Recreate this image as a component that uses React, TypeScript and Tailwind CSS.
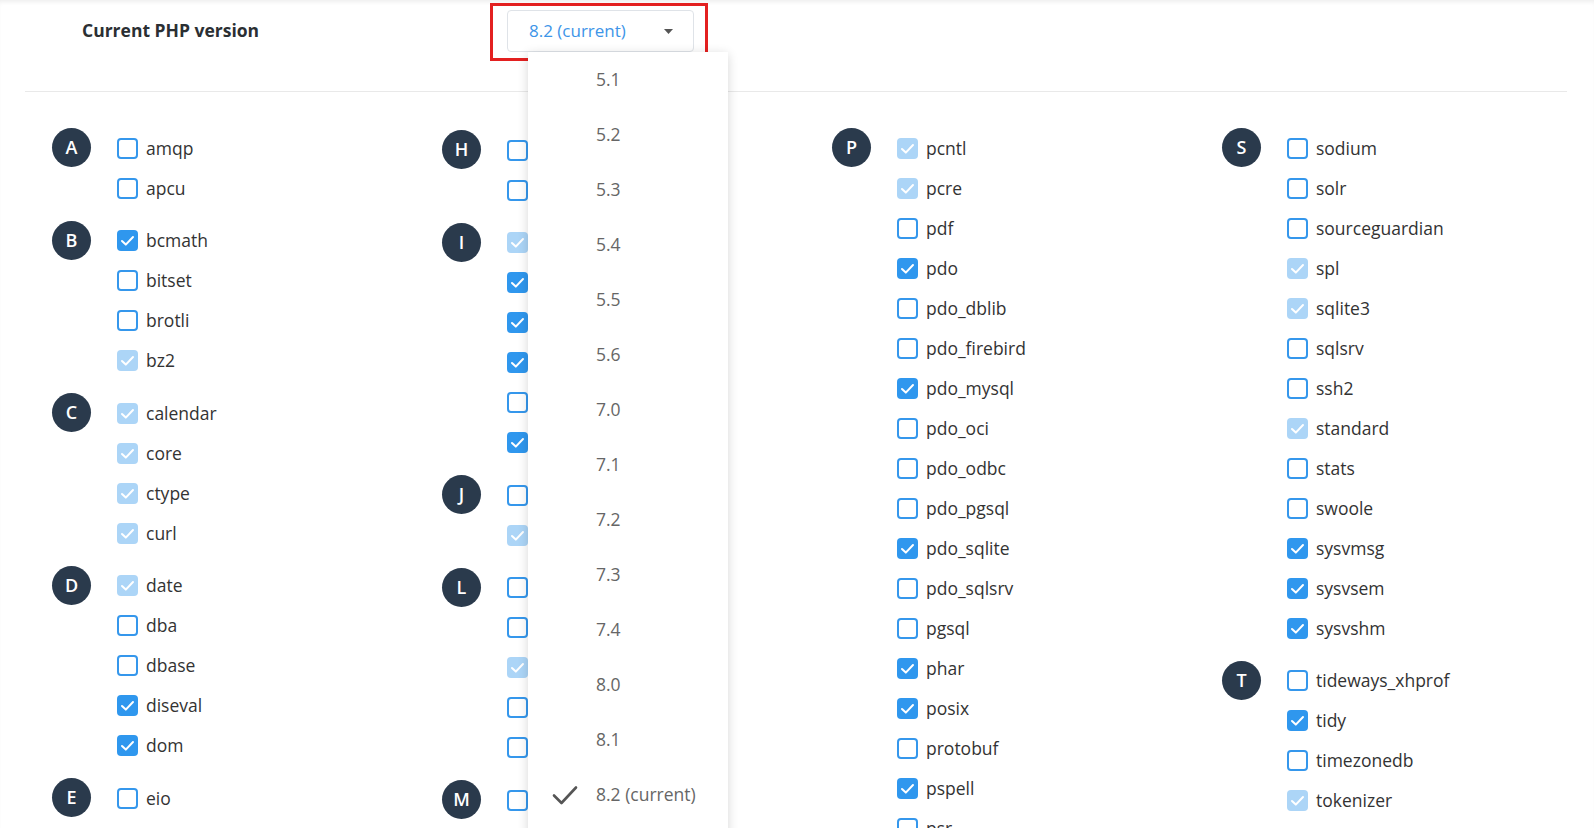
import React from "react"

type State = "off" | "on" | "locked"

interface Group {
  letter: string
  items: [string, State][]
}

const COLUMNS: Group[][] = [
  [
    { letter: "A", items: [["amqp", "off"], ["apcu", "off"]] },
    { letter: "B", items: [["bcmath", "on"], ["bitset", "off"], ["brotli", "off"], ["bz2", "locked"]] },
    { letter: "C", items: [["calendar", "locked"], ["core", "locked"], ["ctype", "locked"], ["curl", "locked"]] },
    { letter: "D", items: [["date", "locked"], ["dba", "off"], ["dbase", "off"], ["diseval", "on"], ["dom", "on"]] },
    { letter: "E", items: [["eio", "off"], ["enchant", "off"]] },
  ],
  [
    { letter: "H", items: [["hrtime", "off"], ["http", "off"]] },
    {
      letter: "I",
      items: [["iconv", "locked"], ["igbinary", "on"], ["imagick", "on"], ["imap", "on"], ["inotify", "off"], ["intl", "on"]],
    },
    { letter: "J", items: [["jsmin", "off"], ["json", "locked"]] },
    { letter: "L", items: [["ldap", "off"], ["leveldb", "off"], ["libxml", "locked"], ["lua", "off"], ["lzf", "off"]] },
    { letter: "M", items: [["mailparse", "off"], ["mbstring", "on"]] },
  ],
  [
    {
      letter: "P",
      items: [
        ["pcntl", "locked"],
        ["pcre", "locked"],
        ["pdf", "off"],
        ["pdo", "on"],
        ["pdo_dblib", "off"],
        ["pdo_firebird", "off"],
        ["pdo_mysql", "on"],
        ["pdo_oci", "off"],
        ["pdo_odbc", "off"],
        ["pdo_pgsql", "off"],
        ["pdo_sqlite", "on"],
        ["pdo_sqlsrv", "off"],
        ["pgsql", "off"],
        ["phar", "on"],
        ["posix", "on"],
        ["protobuf", "off"],
        ["pspell", "on"],
        ["psr", "off"],
      ],
    },
  ],
  [
    {
      letter: "S",
      items: [
        ["sodium", "off"],
        ["solr", "off"],
        ["sourceguardian", "off"],
        ["spl", "locked"],
        ["sqlite3", "locked"],
        ["sqlsrv", "off"],
        ["ssh2", "off"],
        ["standard", "locked"],
        ["stats", "off"],
        ["swoole", "off"],
        ["sysvmsg", "on"],
        ["sysvsem", "on"],
        ["sysvshm", "on"],
      ],
    },
    { letter: "T", items: [["tideways_xhprof", "off"], ["tidy", "on"], ["timezonedb", "off"], ["tokenizer", "locked"]] },
  ],
]

const VERSIONS = ["5.1", "5.2", "5.3", "5.4", "5.5", "5.6", "7.0", "7.1", "7.2", "7.3", "7.4", "8.0", "8.1", "8.2 (current)"]

function Checkbox({ state }: { state: State }) {
  if (state === "off") {
    return <span className="w-[21px] h-[21px] shrink-0 rounded-[4px] border-2 border-[#3597ec] bg-white" />
  }
  return (
    <span
      className={`w-[21px] h-[21px] shrink-0 rounded-[4px] flex items-center justify-center ${
        state === "on" ? "bg-[#2f97ee]" : "bg-[#acd5f7]"
      }`}
    >
      <svg width="21" height="21" viewBox="0 0 21 21" fill="none">
        <path d="M5 11 L8.8 14.6 L16 7" stroke="white" strokeWidth="2" strokeLinecap="round" strokeLinejoin="round" />
      </svg>
    </span>
  )
}

function ExtensionGroup({ group }: { group: Group }) {
  return (
    <div className="flex mb-[12.5px]">
      <div className="w-[39px] h-[39px] shrink-0 rounded-full bg-[#2a3a4c] text-white flex items-center justify-center text-[18px] font-semibold">
        {group.letter}
      </div>
      <div className="ml-[26px] flex flex-col">
        {group.items.map(([name, state]) => (
          <label key={name} className="flex items-center h-[40px] gap-[8px] cursor-pointer">
            <Checkbox state={state} />
            <span className="text-[17.5px] text-[#333]">{name}</span>
          </label>
        ))}
      </div>
    </div>
  )
}

export default function App() {
  return (
    <div
      className="w-full h-[828px] overflow-hidden bg-white pl-[25px] shadow-[inset_0_4px_4px_-2px_rgba(0,0,0,0.07)]"
      style={{ fontFamily: '"Open Sans", "Noto Sans", sans-serif' }}
    >
      <div className="w-[1542px]">
        {/* Header */}
        <div className="flex items-start pt-[10px] h-[92px] border-b border-[#e9e9e9]">
          <div className="pl-[57px] w-[482px] h-[40px] flex items-center text-[17.5px] font-bold text-[#2b2f33]">
            Current PHP version
          </div>
          <div className="relative z-10 w-[187px] h-[42px] border border-[#dfe3e8] rounded-[4px] pl-[21px] pr-[20px] flex items-center">
            <span className="text-[17px] text-[#3d95e8]">8.2 (current)</span>
            <svg className="ml-auto" width="9" height="5" viewBox="0 0 9 5">
              <path d="M0 0 H9 L4.5 5 Z" fill="#555" />
            </svg>

            <div className="absolute -left-[18px] -top-[8px] w-[218px] h-[58px] border-[3px] border-[#e32020] pointer-events-none" />

            {/* Version dropdown */}
            <div className="absolute left-[20px] top-[41px] w-[200px] pb-[40px] bg-white shadow-[0_2px_10px_rgba(0,0,0,0.16)]">
              {VERSIONS.map((v) => (
                <div key={v} className="relative h-[55px] flex items-center pl-[68px] text-[17.5px] text-[#666]">
                  {v.includes("current") && (
                    <svg className="absolute left-[24px]" width="26" height="20" viewBox="0 0 26 20" fill="none">
                      <path d="M2 10.5 L9.5 18 L24 2.5" stroke="#555" strokeWidth="2.6" strokeLinecap="round" strokeLinejoin="round" />
                    </svg>
                  )}
                  {v}
                </div>
              ))}
            </div>
          </div>
        </div>

        {/* Extensions grid */}
        <div className="grid grid-cols-[390px_390px_390px_390px] pl-[27px] pt-[36px]">
          {COLUMNS.map((col, i) => (
            <div key={i} className={i === 1 ? "pt-[2px]" : ""}>
              {col.map((g) => (
                <ExtensionGroup key={g.letter} group={g} />
              ))}
            </div>
          ))}
        </div>
      </div>
    </div>
  )
}
